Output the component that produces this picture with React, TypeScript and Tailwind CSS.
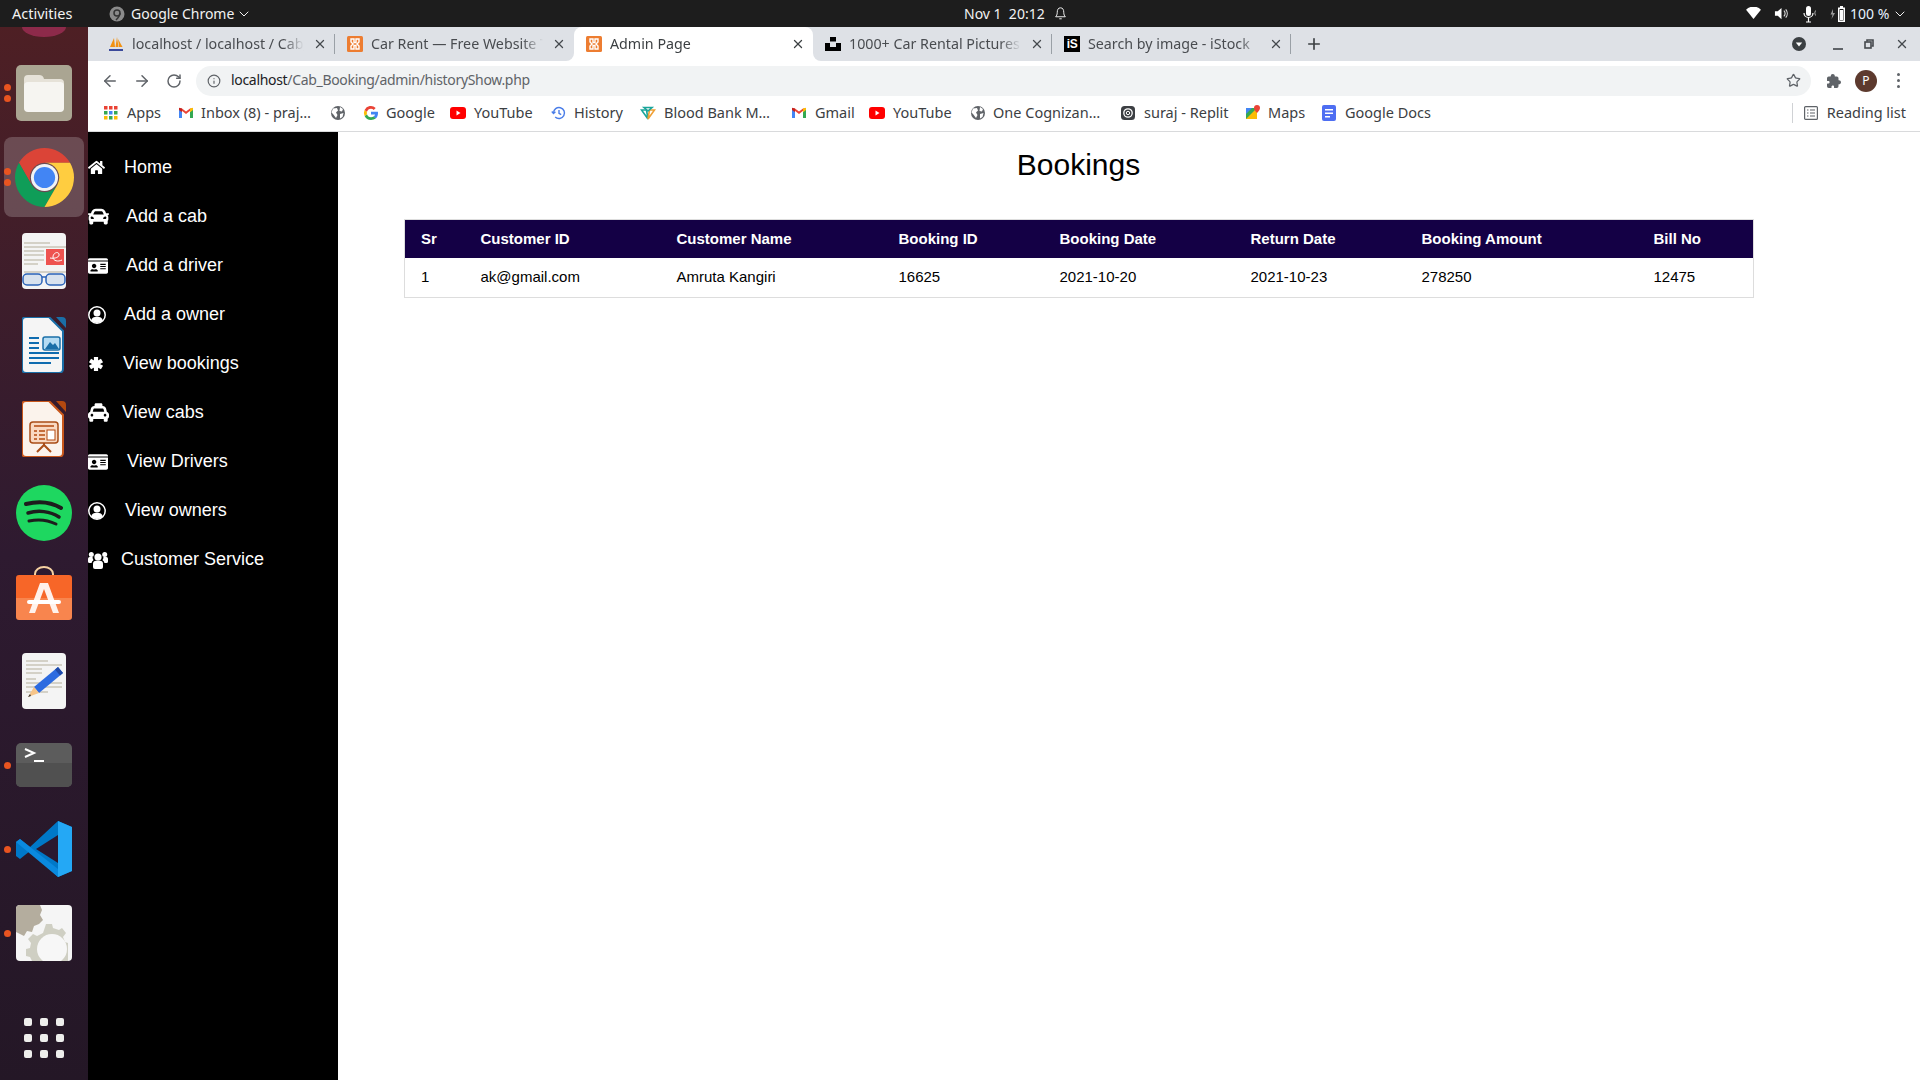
import { ReactNode } from 'react';
import { FaCar, FaHome, FaIdCard, FaTaxi } from 'react-icons/fa';
import { IoExtensionPuzzle } from 'react-icons/io5';
import { X, Plus, ArrowLeft, ArrowRight, RotateCw, Info, Star, ChevronDown } from 'lucide-react';

const Gmail = () => (
  <svg viewBox="0 0 16 16" className="w-4 h-4">
    <path d="M1 4v9h3V7z" fill="#4285f4" />
    <path d="M15 4v9h-3V7z" fill="#34a853" />
    <path d="M1 3.500 8 9l7-5.500-3 0-4 3-4-3z" fill="#ea4335" />
    <path d="M12 3.500 15 2.800V5l-3 2.200z" fill="#fbbc04" />
    <path d="M1 2.800 4 3.500v3.700L1 5z" fill="#c5221f" />
  </svg>
);
const Globe = () => (
  <svg viewBox="0 0 16 16" className="w-4 h-4">
    <circle cx="8" cy="8" r="7" fill="#5f6368" />
    <path d="M3 3.500 7 3l1 2.500L6 7.500 7.500 10 6 13 3 9 1.500 7.500zM10 2l3 2-1 2.500-2.500-.5zM10 9l3.500-1-1 4-2.500 1.500z" fill="#fff" />
  </svg>
);
const YouTube = () => (
  <svg viewBox="0 0 16 16" className="w-4 h-4">
    <rect y="2" width="16" height="12" rx="3" fill="#f00" />
    <path d="M6.500 5.500 10.500 8l-4 2.500z" fill="#fff" />
  </svg>
);
const GoogleG = () => (
  <svg viewBox="0 0 16 16" className="w-4 h-4">
    <path d="M15 8.200c0-.5 0-1-.1-1.500H8v2.800h4a3.400 3.400 0 0 1-1.500 2.200l2.300 1.800C14.200 12.200 15 10.400 15 8.200z" fill="#4285f4" />
    <path d="M8 15c1.900 0 3.500-.6 4.800-1.700l-2.300-1.800c-.6.400-1.500.7-2.500.7a4.200 4.200 0 0 1-4-2.900L1.600 11.100A7 7 0 0 0 8 15z" fill="#34a853" />
    <path d="M4 9.300a4.200 4.200 0 0 1 0-2.600L1.600 4.900a7 7 0 0 0 0 6.200z" fill="#fbbc05" />
    <path d="M8 3.800c1 0 2 .4 2.700 1.100l2-2A7 7 0 0 0 1.600 4.900L4 6.700a4.200 4.200 0 0 1 4-2.900z" fill="#ea4335" />
  </svg>
);
const HistoryIcon = () => (
  <svg viewBox="0 0 16 16" className="w-4 h-4" fill="none" stroke="#4a7de8" strokeWidth="1.400">
    <path d="M2.500 8a5.500 5.500 0 1 1 1.700 4" />
    <path d="M.8 6.500 2.500 8.500 4.400 6.700" />
    <path d="M8 5v3.300l2.200 1.300" />
  </svg>
);
const BloodBank = () => (
  <svg viewBox="0 0 16 16" className="w-4 h-4" fill="none" strokeWidth="1.600">
    <path d="M1.500 5h5L8 14z" stroke="#1aa59a" />
    <path d="M14.500 5h-5L8 14z" stroke="#f0a035" />
    <path d="M4 2.500h8L8 6z" stroke="#1aa59a" />
  </svg>
);
const Replit = () => (
  <svg viewBox="0 0 16 16" className="w-4 h-4">
    <rect x="1" y="1" width="14" height="14" rx="3.500" fill="#3c3f43" />
    <circle cx="8" cy="8" r="4.200" fill="none" stroke="#fff" strokeWidth="1.300" />
    <circle cx="8" cy="8" r="1.700" fill="none" stroke="#fff" strokeWidth="1" />
  </svg>
);
const Maps = () => (
  <svg viewBox="0 0 16 16" className="w-4 h-4">
    <path d="M1 3h11v11H1z" fill="#34a853" />
    <path d="M1 14 12 3v11z" fill="#fbbc04" />
    <path d="M1 3h6L1 9z" fill="#4285f4" />
    <path d="M12 0a3 3 0 0 0-3 3c0 2 3 5 3 5s3-3 3-5a3 3 0 0 0-3-3z" fill="#ea4335" />
  </svg>
);
const Docs = () => (
  <svg viewBox="0 0 16 16" className="w-4 h-4">
    <rect x="1" width="14" height="16" rx="2" fill="#4e6ef2" />
    <path d="M4 4h8v1.500H4zM4 7.500h8V9H4zM4 11h5v1.500H4z" fill="#fff" />
  </svg>
);
const AppsGrid = () => (
  <svg viewBox="0 0 14 14" className="w-3.5 h-3.5">
    {[
      ['#ea4335', '#ea4335', '#ea4335'],
      ['#34a853', '#4285f4', '#34a853'],
      ['#fbbc04', '#34a853', '#fbbc04'],
    ].map((row, y) =>
      row.map((c, x) => <rect key={`${x}${y}`} x={x * 5} y={y * 5} width="3.500" height="3.500" fill={c} />),
    )}
  </svg>
);

const bookmarks: { icon: ReactNode; label?: string; box: string }[] = [
  { icon: <AppsGrid />, label: 'Apps', box: 'w-[75px] pl-[1px] gap-[9px]' },
  { icon: <Gmail />, label: 'Inbox (8) - praj…', box: 'w-[152px] gap-[7px]' },
  { icon: <Globe />, box: 'w-[33px]' },
  { icon: <GoogleG />, label: 'Google', box: 'w-[87px] gap-[7px]' },
  { icon: <YouTube />, label: 'YouTube', box: 'w-[101px] gap-[8px]' },
  { icon: <HistoryIcon />, label: 'History', box: 'w-[89px] gap-[7px]' },
  { icon: <BloodBank />, label: 'Blood Bank M…', box: 'w-[151px] gap-[8px]' },
  { icon: <Gmail />, label: 'Gmail', box: 'w-[78px] gap-[8px]' },
  { icon: <YouTube />, label: 'YouTube', box: 'w-[101px] gap-[8px]' },
  { icon: <Globe />, label: 'One Cognizan…', box: 'w-[150px] gap-[7px]' },
  { icon: <Replit />, label: 'suraj - Replit', box: 'w-[125px] gap-[8px]' },
  { icon: <Maps />, label: 'Maps', box: 'w-[76px] gap-[7px]' },
  { icon: <Docs />, label: 'Google Docs', box: 'gap-[8px]' },
];

const PmaIcon = () => (
  <svg viewBox="0 0 16 16" className="w-4 h-4">
    <path d="M2 11 6 2l1 9zM7.500 11 9 1l1.500 10zM11 11 10 3l4.500 8z" fill="#f29111" />
    <path d="M1 13h14v2H1z" fill="#3b4a9b" />
  </svg>
);
const XamppIcon = () => (
  <svg viewBox="0 0 16 16" className="w-4 h-4">
    <rect width="16" height="16" rx="1.500" fill="#ed7d31" />
    <path d="M4 3h3v3.500h2V3h3v3l-2 2 2 2v3H9V9.500H7V13H4v-3l2-2-2-2z" fill="none" stroke="#fff" strokeWidth="1.400" />
  </svg>
);
const UnsplashIcon = () => (
  <svg viewBox="0 0 16 16" className="w-4 h-4">
    <path d="M5 1h6v4.500H5zM0 7h5v4h6V7h5v8H0z" fill="#000" />
  </svg>
);
const IStockIcon = () => (
  <div className="w-4 h-4 bg-black text-white text-[12px] leading-4 font-bold text-center font-['Liberation_Sans',sans-serif] tracking-[-0.5px]">
    iS
  </div>
);

const tabs = [
  { icon: <PmaIcon />, title: 'localhost / localhost / Cab_Booking' },
  { icon: <XamppIcon />, title: 'Car Rent — Free Website Template' },
  { icon: <XamppIcon />, title: 'Admin Page', active: true },
  { icon: <UnsplashIcon />, title: '1000+ Car Rental Pictures' },
  { icon: <IStockIcon />, title: 'Search by image - iStock' },
];

function TopBar() {
  return (
    <div className="h-[27px] bg-[#1d1d1d] text-[#f2f2f2] text-[14px] flex items-center relative font-['Noto_Sans',sans-serif]">
      <span className="ml-3 w-[97px] text-[14.5px]">Activities</span>
      <svg viewBox="0 0 16 16" className="w-4 h-4">
        <circle cx="8" cy="8" r="7.500" fill="#8a8a8a" />
        <circle cx="8" cy="7" r="3" fill="none" stroke="#333" strokeWidth="1.500" />
        <path d="M11 7c0 3-2 5-4 7" fill="none" stroke="#333" strokeWidth="1.500" />
      </svg>
      <span className="ml-[6px]">Google Chrome</span>
      <ChevronDown className="w-4 h-4 ml-[2px]" strokeWidth={1.500} />
      <div className="absolute left-[964px] top-0 h-full flex items-center">
        <span className="w-[90px]">Nov 1&nbsp;&nbsp;20:12</span>
        <svg viewBox="0 0 16 18" className="w-[13px] h-[15px]" fill="none" stroke="#f2f2f2" strokeWidth="1.200">
          <path d="M8 2c3 0 4 2.500 4 5.500s1 4.500 2 5.500H2c1-1 2-2.500 2-5.500S5 2 8 2zM6.500 15.500h3" />
        </svg>
      </div>
      <div className="absolute right-0 top-0 h-full flex items-center">
        <svg viewBox="0 0 16 14" className="w-[15px] h-[13px]"><path d="M0 3a11 11 0 0 1 16 0L8 13z" fill="#fff" /></svg>
        <svg viewBox="0 0 16 16" className="w-[15px] h-[15px] ml-[13px]" fill="none">
          <path d="M1 5.500h3L8 2v12l-4-3.500H1z" fill="#fff" />
          <path d="M10.500 5a4 4 0 0 1 0 6M12.500 3.500a7 7 0 0 1 0 9" stroke="#ddd" strokeWidth="1.200" />
        </svg>
        <svg viewBox="0 0 16 18" className="w-[16px] h-[18px] ml-[14px]" fill="none">
          <rect x="3" y="1" width="5" height="10" rx="2.500" fill="#fff" />
          <path d="M1 8a4.500 4.500 0 0 0 9 0M5.500 13v4M3 17h5" stroke="#fff" strokeWidth="1.200" />
          <path d="M12.500 5.500a5 5 0 0 0 0 5" stroke="#aaa" strokeWidth="1" />
        </svg>
        <svg viewBox="0 0 18 18" className="w-[18px] h-[18px] ml-[10px]">
          <path d="M4 4 1.500 9.500h2L2.500 14 6 8H4z" fill="#999" />
          <path d="M11 1h3v1.500h2V17H9V2.500h2z" fill="#fff" />
          <rect x="10.500" y="4" width="4" height="11.500" fill="#1d1d1d" />
          <rect x="11" y="5" width="3" height="10" fill="#fff" />
        </svg>
        <span className="ml-[3px] w-[40px] text-[#e8f2ff]">100 %</span>
        <ChevronDown className="w-4 h-4 ml-[2px] mr-[12px]" strokeWidth={1.500} />
      </div>
    </div>
  );
}

function Tab({ icon, title, active, divider }: { icon: ReactNode; title: string; active?: boolean; divider?: boolean }) {
  return (
    <div className={`w-[239px] h-[34px] flex items-center pl-3 pb-[1px] relative ${active ? 'bg-white rounded-t-lg' : ''}`}>
      {icon}
      <span
        className={`ml-[8px] w-[172px] whitespace-nowrap overflow-hidden text-[14.25px] font-['Noto_Sans',sans-serif] [mask-image:linear-gradient(to_right,black_88%,transparent)] ${active ? 'text-[#3c4043]' : 'text-[#494c50]'}`}
      >
        {title}
      </span>
      <X className={`w-[14px] h-[14px] absolute left-[217px] top-[10px] ${active ? 'text-[#3c4043]' : 'text-[#45494e]'}`} strokeWidth={2.200} />
      {divider && <div className="absolute right-0 top-[7px] h-5 w-px bg-[#9aa0a6]" />}
      {active && (
        <>
          <div className="absolute left-[-8px] bottom-0 w-2 h-2 bg-white">
            <div className="w-full h-full bg-[#dee1e6] rounded-br-lg" />
          </div>
          <div className="absolute right-[-8px] bottom-0 w-2 h-2 bg-white">
            <div className="w-full h-full bg-[#dee1e6] rounded-bl-lg" />
          </div>
        </>
      )}
    </div>
  );
}

function BrowserChrome() {
  return (
    <div className="shrink-0">
      <div className="h-[34px] bg-[#dee1e6] flex items-center pl-2 relative">
        {tabs.map((t, i) => (
          <Tab key={t.title} icon={t.icon} title={t.title} active={t.active} divider={i === 0 || i >= 3} />
        ))}
        <Plus className="w-[18px] h-[18px] ml-[14px] text-[#3c4043]" strokeWidth={2.200} />
        <div className="ml-auto flex items-center text-[#45494e]">
          <svg viewBox="0 0 14 14" className="w-[14px] h-[14px]">
            <circle cx="7" cy="7" r="7" fill="#3c4043" />
            <path d="M3.800 5.500h6.400L7 9.500z" fill="#fff" />
          </svg>
          <div className="w-[10px] h-[2px] bg-[#5f6368] ml-[27px] mt-[9px]" />
          <svg viewBox="0 0 10 10" className="w-[10px] h-[10px] ml-[21px]" fill="none" stroke="#45494e" strokeWidth="1.600">
            <path d="M3 2.500V1h6v6H7.500" />
            <rect x="1" y="3" width="6" height="6" />
          </svg>
          <X className="w-[14px] h-[14px] ml-[21px] mr-[11px]" strokeWidth={2.400} />
        </div>
      </div>
      <div className="h-[39px] bg-white flex items-center relative">
        <ArrowLeft className="w-[18px] h-[18px] text-[#5f6368] ml-[13px]" strokeWidth={2} />
        <ArrowRight className="w-[18px] h-[18px] text-[#5f6368] ml-[14px]" strokeWidth={2} />
        <RotateCw className="w-4 h-4 text-[#5f6368] ml-[15px]" strokeWidth={2.200} />
        <div className="ml-[14px] w-[1615px] h-[30px] rounded-full bg-[#f1f3f4] flex items-center pl-[11px]">
          <Info className="w-[14px] h-[14px] text-[#5f6368]" strokeWidth={2} />
          <span className="ml-[10px] mb-[2px] text-[14px] font-['Noto_Sans',sans-serif] text-[#5f6368] tracking-[-0.32px]">
            <span className="text-[#202124]">localhost</span>/Cab_Booking/admin/historyShow.php
          </span>
          <Star className="w-[15px] h-[15px] text-[#5f6368] ml-auto mr-[10px]" strokeWidth={2} />
        </div>
        <IoExtensionPuzzle className="w-4 h-4 text-[#5f6368] ml-[15px]" />
        <div className="w-[22px] h-[22px] rounded-full bg-[#5d3a2e] text-white text-[12px] leading-[22px] text-center ml-[13px] font-['Noto_Sans',sans-serif]">
          P
        </div>
        <div className="flex flex-col gap-[3px] ml-[20px]">
          <div className="w-[3px] h-[3px] rounded-full bg-[#5f6368]" />
          <div className="w-[3px] h-[3px] rounded-full bg-[#5f6368]" />
          <div className="w-[3px] h-[3px] rounded-full bg-[#5f6368]" />
        </div>
      </div>
      <div className="h-[32px] bg-white border-b border-[#d9dadc] flex items-center pl-[15px] pb-[6px] text-[14.5px] text-[#3c4043] font-['Noto_Sans',sans-serif] relative">
        {bookmarks.map((b, i) => (
          <div key={i} className={`flex items-center shrink-0 whitespace-nowrap ${b.box}`}>
            {b.icon}
            {b.label && <span>{b.label}</span>}
          </div>
        ))}
        <div className="ml-auto flex items-center mr-[14px]">
          <div className="w-px h-5 bg-[#d0d2d5] mr-[4px]" />
          <svg viewBox="0 0 14 14" className="w-[14px] h-[14px] ml-[7px]" fill="none" stroke="#5f6368" strokeWidth="1.200">
            <rect x=".6" y=".6" width="12.800" height="12.800" rx="1" />
            <path d="M3 4h1.500M6 4h5M3 7h1.500M6 7h5M3 10h1.500M6 10h5" />
          </svg>
          <span className="ml-[9px] whitespace-nowrap">Reading list</span>
        </div>
      </div>
    </div>
  );
}

const UserRing = () => (
  <svg viewBox="0 0 18 18" className="w-[18px] h-[18px]">
    <circle cx="9" cy="9" r="8.200" fill="none" stroke="#fff" strokeWidth="1.500" />
    <circle cx="9" cy="7" r="3.500" fill="#fff" />
    <path d="M3.200 14.500c.6-2.700 2.600-3.700 5.800-3.700s5.200 1 5.800 3.700A8 8 0 0 1 9 17a8 8 0 0 1-5.800-2.500z" fill="#fff" />
  </svg>
);
const Star6 = () => (
  <svg viewBox="0 0 16 16" className="w-[16px] h-[16px]" stroke="#fff" strokeWidth="4.200">
    <path d="M8 1v14M2 4.500l12 7M14 4.500l-12 7" />
  </svg>
);
const UsersIcon = () => (
  <svg viewBox="0 0 20 18" className="w-[20px] h-[18px]" fill="#fff">
    <circle cx="10" cy="6" r="3.600" />
    <circle cx="3.300" cy="3.500" r="2.500" />
    <circle cx="16.700" cy="3.500" r="2.500" />
    <path d="M5 12.500c0-2 1.500-3 5-3s5 1 5 3V16a2 2 0 0 1-2 2H7a2 2 0 0 1-2-2z" />
    <path d="M0 8c0-1.500 1-2.200 3-2.200.7 0 1.300.1 1.700.4-.2 1.200.2 2.200.9 2.800C4.500 9.800 3.700 10.800 3.600 12H1.500A1.500 1.500 0 0 1 0 10.500z" />
    <path d="M20 8c0-1.500-1-2.200-3-2.200-.7 0-1.300.1-1.700.4.200 1.200-.2 2.200-.9 2.800 1.100.8 1.900 1.800 2 3h2.100a1.500 1.500 0 0 0 1.500-1.500z" />
  </svg>
);

const navItems = [
  { icon: <FaHome className="w-[17px] h-[17px]" />, label: 'Home', gap: 'ml-[19px]' },
  { icon: <FaCar className="w-[21px] h-[21px]" />, label: 'Add a cab', gap: 'ml-[17px]' },
  { icon: <FaIdCard className="w-[20px] h-[20px]" />, label: 'Add a driver', gap: 'ml-[18px]' },
  { icon: <UserRing />, label: 'Add a owner', gap: 'ml-[18px]' },
  { icon: <Star6 />, label: 'View bookings', gap: 'ml-[19px]' },
  { icon: <FaTaxi className="w-[21px] h-[21px]" />, label: 'View cabs', gap: 'ml-[13px]' },
  { icon: <FaIdCard className="w-[20px] h-[20px]" />, label: 'View Drivers', gap: 'ml-[19px]' },
  { icon: <UserRing />, label: 'View owners', gap: 'ml-[19px]' },
  { icon: <UsersIcon />, label: 'Customer Service', gap: 'ml-[13px]' },
];

function Sidebar() {
  return (
    <aside className="w-[250px] shrink-0 bg-black text-white pt-[11px] text-[18px] font-['Liberation_Sans',sans-serif]">
      {navItems.map((n) => (
        <div key={n.label} className="h-[49px] flex items-center">
          {n.icon}
          <span className={n.gap}>{n.label}</span>
        </div>
      ))}
    </aside>
  );
}

const cols = ['w-[60px]', 'w-[196px]', 'w-[222px]', 'w-[161px]', 'w-[191px]', 'w-[171px]', 'w-[232px]', 'w-[116px]'];
const headers = ['Sr', 'Customer ID', 'Customer Name', 'Booking ID', 'Booking Date', 'Return Date', 'Booking Amount', 'Bill No'];
const row = ['1', 'ak@gmail.com', 'Amruta Kangiri', '16625', '2021-10-20', '2021-10-23', '278250', '12475'];

function Main() {
  return (
    <main className="flex-1 bg-white pl-[66px] font-['Liberation_Sans',sans-serif] text-black">
      <div className="w-[1349px]">
        <h1 className="text-[30px] leading-[38px] text-center pt-[14px]">Bookings</h1>
        <table className="mt-[35px] w-[1349px] table-fixed border-collapse border border-[#dddddd] text-[15px]">
          <colgroup>
            {cols.map((c, i) => (
              <col key={i} className={c} />
            ))}
          </colgroup>
          <thead>
            <tr className="bg-[#140045] text-white h-[38px]">
              {headers.map((h) => (
                <th key={h} className="text-left font-bold pl-4">
                  {h}
                </th>
              ))}
            </tr>
          </thead>
          <tbody>
            <tr className="h-[40px]">
              {row.map((c) => (
                <td key={c} className="pl-4">
                  {c}
                </td>
              ))}
            </tr>
          </tbody>
        </table>
      </div>
    </main>
  );
}

const Doc = ({ children, color }: { children: ReactNode; color?: string }) => (
  <svg viewBox="0 0 44 56" className="w-[44px] h-[56px]">
    <rect width="44" height="56" rx="4" fill={color ?? '#f4f4f4'} />
    {children}
  </svg>
);

function DockItem({ children, dots = 0, active }: { children: ReactNode; dots?: number; active?: boolean }) {
  return (
    <div className="h-[84px] flex items-center justify-center relative shrink-0">
      {active && <div className="absolute left-[4px] top-[2px] w-[80px] h-[80px] rounded-lg bg-white/20" />}
      {dots > 0 && (
        <div className="absolute left-[4px] top-0 h-full flex flex-col justify-center gap-[4px]">
          {Array.from({ length: dots }).map((_, i) => (
            <div key={i} className="w-[7px] h-[7px] rounded-full bg-[#e95420]" />
          ))}
        </div>
      )}
      <div className="relative flex">{children}</div>
    </div>
  );
}

function Dock() {
  return (
    <aside className="w-[88px] shrink-0 flex flex-col overflow-hidden bg-gradient-to-b from-[#4e1f24] via-[#2e1a30] to-[#241726]">
      <div className="h-[24px] shrink-0 overflow-hidden">
        <svg viewBox="0 0 88 10" className="w-[88px] h-[10px]">
          <path d="M22 0a22 10 0 0 0 44 0z" fill="#8d2a4a" />
        </svg>
      </div>
      <DockItem dots={2}>
        <svg viewBox="0 0 56 56" className="w-[56px] h-[56px]">
          <rect width="56" height="56" rx="5" fill="#aaa592" />
          <path d="M8 14a4 4 0 0 1 4-4h11a5 5 0 0 1 5 4h16a4 4 0 0 1 4 4v24a4 4 0 0 1-4 4H12a4 4 0 0 1-4-4z" fill="#e6e2d8" />
          <rect x="8" y="17" width="40" height="30" rx="4" fill="#f6f5f1" />
        </svg>
      </DockItem>
      <DockItem dots={2} active>
        <svg viewBox="0 0 100 100" className="w-[59px] h-[59px]">
          <path d="M6.700 25A50 50 0 0 1 93.300 25H50A25 25 0 0 0 28.350 62.500Z" fill="#db4437" />
          <path d="M6.700 25 28.350 62.500A25 25 0 0 0 71.650 62.500L50 100A50 50 0 0 1 6.700 25Z" fill="#0f9d58" />
          <path d="M93.300 25A50 50 0 0 1 50 100L71.650 62.500A25 25 0 0 0 50 25Z" fill="#ffcd40" />
          <circle cx="50" cy="50" r="23" fill="#f1f3f4" />
          <circle cx="50" cy="50" r="18" fill="#4285f4" />
        </svg>
      </DockItem>
      <DockItem>
        <Doc>
          <path d="M2 10h26M2 14h42M2 18h20M2 22h20M2 27h20M2 31h14M2 39h42" stroke="#c9c5b8" strokeWidth="1.500" />
          <rect x="24" y="16" width="18" height="16" fill="#ee5350" />
          <path d="M28 25c5 1 10-1 9-4s-6-1-6 3 5 5 9 3" fill="none" stroke="#fff" strokeWidth="1" />
          <rect x="1" y="41" width="19" height="11" rx="4" fill="#d8e2ee" stroke="#2b63b8" strokeWidth="1.500" />
          <rect x="24" y="41" width="19" height="11" rx="4" fill="#d8e2ee" stroke="#2b63b8" strokeWidth="1.500" />
          <path d="M20 44h4" stroke="#2b63b8" strokeWidth="1.500" />
        </Doc>
      </DockItem>
      <DockItem>
        <svg viewBox="0 0 44 56" className="w-[44px] h-[56px]">
          <path d="M4 0h23l14 14v38a4 4 0 0 1-4 4H4a4 4 0 0 1-4-4V4a4 4 0 0 1 4-4z" fill="#f5f5f5" stroke="#1a6fa8" strokeWidth="2" />
          <path d="M34 0h6a4 4 0 0 1 4 4v7z" fill="#1a6fa8" />
          <path d="M7 21h10M7 26h10M7 31h10M7 36h30M7 41h30M7 46h22" stroke="#0f6cb0" strokeWidth="2.200" />
          <rect x="21" y="20" width="17" height="13" rx="2" fill="#b5dcf3" stroke="#1a6fa8" strokeWidth="1.500" />
          <path d="M23 32l5-7 3 3 2-2 4 6z" fill="#1a6fa8" />
        </svg>
      </DockItem>
      <DockItem>
        <svg viewBox="0 0 44 56" className="w-[44px] h-[56px]">
          <path d="M4 0h23l14 14v38a4 4 0 0 1-4 4H4a4 4 0 0 1-4-4V4a4 4 0 0 1 4-4z" fill="#fbf3ec" stroke="#c9581c" strokeWidth="2" />
          <path d="M34 0h6a4 4 0 0 1 4 4v7z" fill="#b4490f" />
          <rect x="8" y="21" width="28" height="21" rx="3" fill="#f9d9c2" stroke="#a94d17" strokeWidth="1.500" />
          <path d="M12 25h20M12 30h3M12 34h3M12 38h3M17 30h6M17 34h6M17 38h6" stroke="#b4490f" strokeWidth="1.500" />
          <rect x="25" y="29" width="8" height="10" fill="#fff" stroke="#b4490f" />
          <path d="M15 51l7-7 7 7M22 42v3" fill="none" stroke="#a94d17" strokeWidth="2" />
        </svg>
      </DockItem>
      <DockItem>
        <svg viewBox="0 0 56 56" className="w-[56px] h-[56px]">
          <circle cx="28" cy="28" r="28" fill="#1ed760" />
          <path d="M10 19c12-3 25-2 35 4" fill="none" stroke="#1d1d1d" strokeWidth="4" strokeLinecap="round" />
          <path d="M12 28c10-3 22-2 31 4" fill="none" stroke="#1d1d1d" strokeWidth="3.500" strokeLinecap="round" />
          <path d="M13 36c9-2 19-1 27 3" fill="none" stroke="#1d1d1d" strokeWidth="3" strokeLinecap="round" />
        </svg>
      </DockItem>
      <DockItem>
        <svg viewBox="0 0 56 54" className="w-[56px] h-[54px] mb-[9px]">
          <path d="M19 10V8a9 7 0 0 1 18 0v2" fill="none" stroke="#f6d2a2" strokeWidth="2" />
          <path d="M0 12a3 3 0 0 1 3-3h50a3 3 0 0 1 3 3v22H0z" fill="#f76628" />
          <path d="M0 32h56v19a3 3 0 0 1-3 3H3a3 3 0 0 1-3-3z" fill="#f8854e" />
          <path d="M13 47 24 17h8l11 30h-6l-9-24-9 24z" fill="#fff" fillOpacity=".9" />
          <rect x="11" y="34" width="34" height="4" rx="2" fill="#fff" />
        </svg>
      </DockItem>
      <DockItem>
        <Doc>
          <path d="M4 8h22M4 12h36M4 16h16M4 20h16M4 26h10M4 30h36M4 34h36M4 39h22" stroke="#c9c5b8" strokeWidth="1.500" />
          <path d="M12 34 36 14l5 6-24 20z" fill="#2d6be0" />
          <path d="M36 14l5 6-3 2.500-5-6z" fill="#1e49a8" />
          <path d="M12 34l5 6-11 4z" fill="#f6c58a" />
          <path d="M8 41l-2 3 3-1z" fill="#333" />
        </Doc>
      </DockItem>
      <DockItem dots={1}>
        <svg viewBox="0 0 56 44" className="w-[56px] h-[44px]">
          <rect width="56" height="44" rx="5" fill="#5c5c5c" />
          <path d="M0 20h56v19a5 5 0 0 1-5 5H5a5 5 0 0 1-5-5z" fill="#505050" />
          <path d="M9 6l9 4-9 4" fill="none" stroke="#fff" strokeWidth="2" />
          <path d="M18 18h10" stroke="#fff" strokeWidth="2" />
        </svg>
      </DockItem>
      <DockItem dots={1}>
        <svg viewBox="0 0 56 56" className="w-[56px] h-[56px]">
          <path d="M42 0 14 26 4 18 0 21v14l4 3 10-8 28 26 14-6V6z" fill="#0078c8" />
          <path d="M42 0l14 6v44l-14 6z" fill="#24a8f5" />
          <path d="M42 14v28L20 28z" fill="#2a1830" />
          <path d="M4 18 42 48v8L0 21z" fill="#0a8adf" />
        </svg>
      </DockItem>
      <DockItem dots={1}>
        <svg viewBox="0 0 56 56" className="w-[56px] h-[56px]">
          <rect width="56" height="56" rx="4" fill="#f5f5f5" />
          <path d="M4 0h20l2 5-2 5 3 5-4 4-5 2-2 6-5-1-3 5-8-4V4a4 4 0 0 1 4-4z" fill="#b4ad9e" />
          <path d="M30 19h6l1 4 6 2 3-2 4 5-3 4 2 5 3 1v18H16l-2-4-4-1v-7l4-1 1-5-3-4 5-5 4 2 6-3z" fill="#cfcfc3" />
          <circle cx="36" cy="44" r="15" fill="#f7f7f7" />
        </svg>
      </DockItem>
      <div className="flex-1 flex items-end justify-center pb-[22px]">
        <div className="grid grid-cols-3 gap-2">
          {Array.from({ length: 9 }).map((_, i) => (
            <div key={i} className="w-2 h-2 rounded-[2px] bg-[#eeeeec]" />
          ))}
        </div>
      </div>
    </aside>
  );
}

export default function App() {
  return (
    <div className="w-[1920px] h-[1080px] flex flex-col overflow-hidden bg-white">
      <TopBar />
      <div className="flex-1 flex min-h-0">
        <Dock />
        <div className="flex-1 flex flex-col min-w-0">
          <BrowserChrome />
          <div className="flex-1 flex min-h-0">
            <Sidebar />
            <Main />
          </div>
        </div>
      </div>
    </div>
  );
}
